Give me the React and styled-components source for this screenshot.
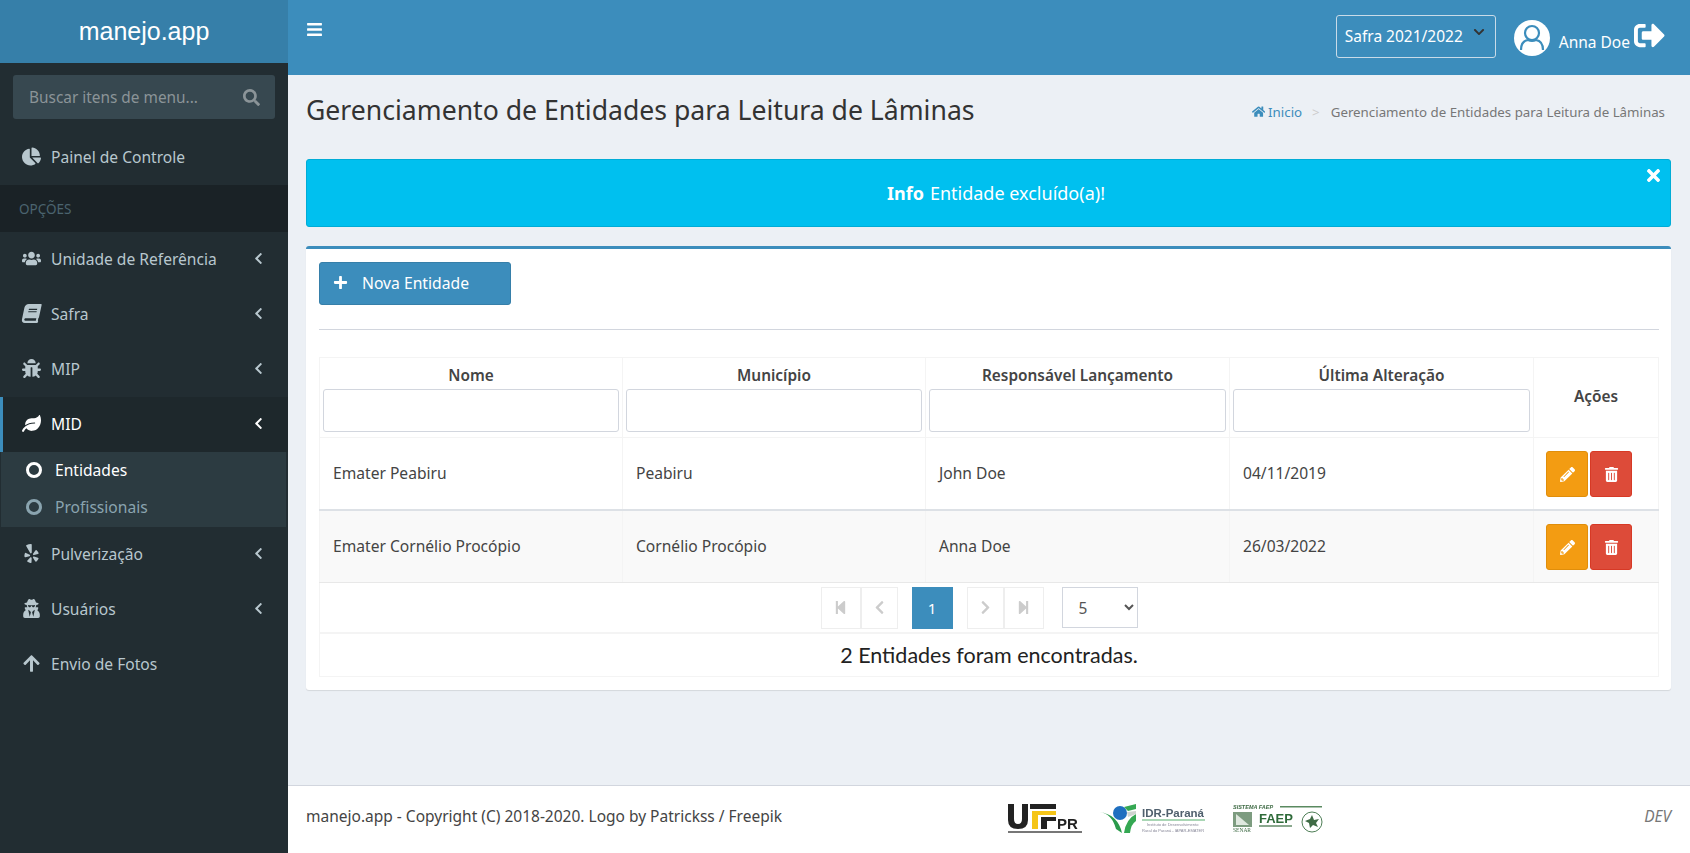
import React from 'react';
import styled, { createGlobalStyle } from 'styled-components';
import {
  FaArrowUp, FaBars, FaBook, FaBug, FaChartPie, FaChevronDown, FaChevronLeft, FaChevronRight,
  FaHome, FaLeaf, FaPencilAlt, FaPlus, FaSearch, FaSignOutAlt, FaStepBackward,
  FaStepForward, FaTimes, FaTrashAlt, FaUsers, FaUserSecret, FaYelp,
} from 'react-icons/fa';

const font = '"Noto Sans", "Lato", sans-serif';

const Global = createGlobalStyle`
  * { box-sizing: border-box; }
  html, body { margin: 0; height: 100%; }
  body { font-family: ${font}; font-size: 15.5px; color: #333; background: #ecf0f5; overflow: hidden; }
`;

const S = {
  Layout: styled.div`
    display: flex;
    width: 1690px;
    height: 853px;
  `,
  Sidebar: styled.aside`
    width: 288px;
    flex: none;
    background: #222d32;
    display: flex;
    flex-direction: column;
  `,
  Brand: styled.div`
    height: 63px;
    background: #367fa9;
    color: #fff;
    font-family: 'Liberation Sans', sans-serif;
    font-size: 25px;
    display: flex;
    align-items: center;
    justify-content: center;
  `,
  Search: styled.div`
    margin: 12px 13px 11px;
    height: 44px;
    border-radius: 3px;
    background: #374850;
    color: #8b9498;
    display: flex;
    align-items: center;
    justify-content: space-between;
    padding: 0 15px 0 16px;
    font-size: 15.4px;
    svg { font-size: 17px; }
  `,
  MenuItem: styled.div`
    height: 55px;
    display: flex;
    align-items: center;
    color: ${(p) => (p.$active ? '#fff' : '#b8c7ce')};
    background: ${(p) => (p.$active ? '#1e282c' : 'transparent')};
    border-left: 3px solid ${(p) => (p.$active ? '#3c8dbc' : 'transparent')};
    padding: 0 23px 2px 19px;
    font-size: 15.6px;
  `,
  MenuIcon: styled.span`
    width: 29px;
    display: flex;
    font-size: 19px;
  `,
  MenuLabel: styled.span`
    flex: 1;
  `,
  SlantedBook: styled(FaBook)`
    transform: skewX(-12deg);
  `,
  Header: styled.div`
    height: 47px;
    background: #1a2226;
    color: #4b646f;
    font-size: 13.5px;
    display: flex;
    align-items: center;
    padding-left: 19px;
  `,
  SubMenu: styled.div`
    height: 75px;
    margin: 0 2px 0 1px;
    background: #2c3b41;
    display: flex;
    flex-direction: column;
    justify-content: center;
    padding-bottom: 2px;
  `,
  SubItem: styled.div`
    height: 37px;
    display: flex;
    align-items: center;
    gap: 13px;
    padding-left: 25px;
    color: ${(p) => (p.$active ? '#fff' : '#8aa4af')};
    font-size: 15.6px;
  `,
  SubDot: styled.span`
    width: 16px;
    height: 16px;
    border-radius: 50%;
    border: 3px solid currentColor;
  `,
  Chevron: styled(FaChevronLeft)`
    font-size: 13px;
  `,
  Main: styled.div`
    flex: 1;
    min-width: 0;
    display: flex;
    flex-direction: column;
  `,
  TopBar: styled.header`
    height: 75px;
    background: #3c8dbc;
    color: #fff;
    display: flex;
    align-items: center;
    justify-content: space-between;
    padding: 0 25px 0 18px;
  `,
  Burger: styled.span`
    display: flex;
    font-size: 17px;
    margin-top: -16px;
  `,
  TopRight: styled.div`
    display: flex;
    align-items: center;
  `,
  SafraWrap: styled.div`
    position: relative;
    width: 160px;
    height: 43px;
    margin: -3px 18px 0 0;
  `,
  SafraSelect: styled.select`
    appearance: none;
    width: 100%;
    height: 100%;
    border: 1px solid #c9dbe8;
    border-radius: 3px;
    background: transparent;
    color: #fff;
    font-family: ${font};
    font-size: 15.5px;
    padding: 0 8px;
  `,
  SafraArrow: styled.span`
    position: absolute;
    right: 11px;
    top: 11px;
    color: #333;
    font-size: 12px;
    display: flex;
  `,
  User: styled.div`
    display: flex;
    align-items: center;
    font-size: 15.5px;
  `,
  UserName: styled.span`
    margin: 8px 4px 0 9px;
  `,
  Logout: styled(FaSignOutAlt)`
    font-size: 31px;
    margin-top: -5px;
  `,
  Content: styled.main`
    flex: 1;
    padding: 0 19px 0 18px;
  `,
  TitleRow: styled.div`
    display: flex;
    align-items: center;
    justify-content: space-between;
    height: 84px;
    padding: 0 6px 15px 0;
  `,
  Title: styled.h1`
    margin: 0;
    font-size: 26.6px;
    font-weight: 400;
    color: #333;
  `,
  Crumbs: styled.div`
    display: flex;
    align-items: center;
    gap: 4px;
    font-size: 13.3px;
    color: #777;
    margin-top: 5px;
  `,
  CrumbLink: styled.span`
    color: #3c8dbc;
    display: flex;
    align-items: center;
    gap: 3px;
  `,
  CrumbSep: styled.span`
    color: #ccc;
    margin: 0 7px 0 6px;
  `,
  Alert: styled.div`
    position: relative;
    height: 68px;
    background: #00c0ef;
    border: 1px solid #00acd6;
    border-radius: 3px;
    color: #fff;
    font-size: 18px;
    display: flex;
    align-items: center;
    justify-content: center;
    gap: 6px;
    padding-left: 15px;
    margin-bottom: 19px;
  `,
  AlertClose: styled.span`
    position: absolute;
    top: 6px;
    right: 7px;
    font-size: 19px;
    display: flex;
  `,
  Box: styled.section`
    background: #fff;
    border-top: 3px solid #3c8dbc;
    border-radius: 3px;
    box-shadow: 0 1px 1px rgba(0, 0, 0, 0.1);
    padding: 13px 12px 13px 13px;
  `,
  NewButton: styled.button`
    width: 192px;
    height: 43px;
    background: #3c8dbc;
    border: 1px solid #367fa9;
    border-radius: 3px;
    color: #fff;
    font-family: ${font};
    font-size: 15.7px;
    display: flex;
    align-items: center;
    gap: 14px;
    padding: 0 13px 2px;
  `,
  Rule: styled.hr`
    border: 0;
    border-top: 1px solid #d2d6de;
    margin: 24px 0 27px;
  `,
  Table: styled.table`
    width: 100%;
    table-layout: fixed;
    border-collapse: collapse;
    border: 1px solid #f4f4f4;
    font-size: 15.6px;
  `,
  Th: styled.th`
    border: 1px solid #f4f4f4;
    padding: ${(p) => (p.$plain ? '4px 3px 7px' : '5px 3px 4px')};
    color: #444;
    font-size: 15.4px;
    font-weight: 600;
    height: 80px;
  `,
  FilterInput: styled.input`
    display: block;
    width: 100%;
    height: 43px;
    margin-top: 3px;
    border: 1px solid #d2d6de;
    border-radius: 3px;
    background: #fff;
  `,
  Tr: styled.tr`
    background: ${(p) => (p.$odd ? '#f9f9f9' : '#fff')};
    border-top: ${(p) => (p.$odd ? '2px solid #dde1e6' : '0')};
  `,
  Td: styled.td`
    border-left: 1px solid #f4f4f4;
    border-right: 1px solid #f4f4f4;
    border-bottom: 1px solid #e8e8e8;
    height: ${(p) => (p.$tall ? 73 : 72)}px;
    padding: 0 13px;
    color: #444;
  `,
  Actions: styled.div`
    display: flex;
    gap: 2px;
    margin: 2px 0 0 -1px;
  `,
  ActionButton: styled.button`
    width: 42px;
    height: 46px;
    border-radius: 3px;
    border: 1px solid ${(p) => (p.$danger ? '#d73925' : '#e08e0b')};
    background: ${(p) => (p.$danger ? '#dd4b39' : '#f39c12')};
    color: #fff;
    font-size: 15px;
    display: flex;
    align-items: center;
    justify-content: center;
    padding: 0;
  `,
  Pager: styled.div`
    height: 50px;
    border: 1px solid #f4f4f4;
    border-top: 0;
    display: flex;
    align-items: center;
    justify-content: center;
    padding-right: 20px;
  `,
  PageButton: styled.span`
    width: ${(p) => p.$w || 37}px;
    height: 42px;
    border: 1px solid #eee;
    color: #ccc;
    font-size: 15px;
    display: flex;
    align-items: center;
    justify-content: center;
  `,
  PageCurrent: styled.span`
    width: 41px;
    height: 42px;
    margin: 0 14px;
    background: #3c8dbc;
    color: #fff;
    font-size: 15px;
    display: flex;
    align-items: center;
    justify-content: center;
  `,
  PageSize: styled.select`
    width: 76px;
    height: 41px;
    margin-left: 18px;
    border: 1px solid #d2d6de;
    background: #fff;
    color: #555;
    font-family: ${font};
    font-size: 15.5px;
    padding: 0 12px;
  `,
  Count: styled.div`
    height: 44px;
    border: 1px solid #f4f4f4;
    color: #222;
    font-family: 'Lato', sans-serif;
    font-size: 21.5px;
    display: flex;
    align-items: center;
    justify-content: center;
  `,
  Footer: styled.footer`
    height: 68px;
    background: #fff;
    border-top: 1px solid #d2d6de;
    display: flex;
    align-items: center;
    justify-content: space-between;
    padding: 0 19px 8px 18px;
    font-size: 15.5px;
    color: #444;
    position: relative;
  `,
  Logos: styled.div`
    position: absolute;
    left: 720px;
    top: 18px;
    display: flex;
    align-items: center;
    gap: 16px;
    filter: blur(0.5px);
  `,
  Dev: styled.em`
    color: #777;
    font-size: 15.5px;
  `,
};

const menuTop = [
  { icon: <FaUsers />, label: 'Unidade de Referência', arrow: true },
  { icon: <S.SlantedBook />, label: 'Safra', arrow: true },
  { icon: <FaBug />, label: 'MIP', arrow: true },
];

const menuBottom = [
  { icon: <FaYelp />, label: 'Pulverização', arrow: true },
  { icon: <FaUserSecret />, label: 'Usuários', arrow: true },
  { icon: <FaArrowUp />, label: 'Envio de Fotos' },
];

const rows = [
  ['Emater Peabiru', 'Peabiru', 'John Doe', '04/11/2019'],
  ['Emater Cornélio Procópio', 'Cornélio Procópio', 'Anna Doe', '26/03/2022'],
];

const columns = ['Nome', 'Município', 'Responsável Lançamento', 'Última Alteração'];

const Avatar = () => (
  <svg width="36" height="36" viewBox="0 0 36 36">
    <circle cx="18" cy="18" r="18" fill="#fff" />
    <circle cx="18" cy="13" r="7" fill="#fff" stroke="#3c8dbc" strokeWidth="2.2" />
    <path d="M7 30q0-9 7-10q4 2 8 0q7 1 7 10" fill="#fff" stroke="#3c8dbc" strokeWidth="2.2" />
  </svg>
);

const UtfprLogo = () => (
  <svg width="76" height="30" viewBox="0 0 76 30">
    <path d="M0 0h6v15q0 5 4 5t4-5V0h6v16q0 9-10 9T0 16z" fill="#222" />
    <rect x="22" y="0" width="26" height="5" fill="#222" />
    <path d="M24 7h24v4H30v14h-6z" fill="#f5c518" />
    <path d="M33 13h15v4h-9v8h-6z" fill="#222" />
    <text x="49" y="25" fontFamily="Liberation Sans" fontSize="15" fontWeight="700" fill="#222">PR</text>
    <rect x="0" y="27" width="74" height="2" fill="#777" />
  </svg>
);

const IdrLogo = () => (
  <svg width="106" height="30" viewBox="0 0 106 30">
    <path d="M0 8q12 2 16 17l6 4Q18 11 0 8z" fill="#2a9a4a" />
    <circle cx="20" cy="9" r="7" fill="#1f6fc0" />
    <path d="M24 3l12-3v5l-8 2zM24 29q2-14 12-19v7q-5 3-6 12z" fill="#35a853" />
    <path d="M27 8l9-1v3l-8 3z" fill="#cfd4d0" />
    <text x="42" y="13" fontFamily="Liberation Sans" fontSize="11.5" fontWeight="700" fill="#50606e">IDR-Paraná</text>
    <rect x="42" y="15" width="63" height="2" fill="#a9d6b5" />
    <text x="47" y="22" fontFamily="Liberation Sans" fontSize="4" fill="#889">Instituto de Desenvolvimento</text>
    <text x="42" y="28" fontFamily="Liberation Sans" fontSize="4" fill="#889">Rural do Paraná - IAPAR-EMATER</text>
  </svg>
);

const FaepLogo = () => (
  <svg width="90" height="30" viewBox="0 0 90 30" style={{ marginLeft: 11 }}>
    <text x="0" y="5" fontFamily="Liberation Sans" fontSize="5.5" fontWeight="700" fontStyle="italic" fill="#3f6b45">SISTEMA FAEP</text>
    <rect x="47" y="2" width="42" height="1.5" fill="#5a8a60" />
    <rect x="0" y="8" width="19" height="15" fill="#7d9c80" />
    <path d="M3 10l13 11H3z" fill="#dfe8df" />
    <text x="0" y="28" fontFamily="Liberation Serif" fontSize="5.5" fill="#3f6b45">SENAR</text>
    <text x="26" y="19" fontFamily="Liberation Sans" fontSize="13" fontWeight="700" fill="#2f6b3a">FAEP</text>
    <rect x="26" y="21" width="33" height="2" fill="#8aa88e" />
    <circle cx="79" cy="18" r="10" fill="#fff" stroke="#4d7d55" strokeWidth="1" />
    <path d="M79 11l2 5 5-1-3 4 2 4-5-2-3 3-1-5-4-2 5-2z" fill="#3f6b45" />
  </svg>
);

const Sidebar = () => (
  <S.Sidebar>
    <S.Brand>manejo.app</S.Brand>
    <S.Search>
      Buscar itens de menu...
      <FaSearch />
    </S.Search>
    <S.MenuItem>
      <S.MenuIcon><FaChartPie /></S.MenuIcon>
      <S.MenuLabel>Painel de Controle</S.MenuLabel>
    </S.MenuItem>
    <S.Header>OPÇÕES</S.Header>
    {menuTop.map((item) => (
      <S.MenuItem key={item.label}>
        <S.MenuIcon>{item.icon}</S.MenuIcon>
        <S.MenuLabel>{item.label}</S.MenuLabel>
        <S.Chevron />
      </S.MenuItem>
    ))}
    <S.MenuItem $active>
      <S.MenuIcon><FaLeaf /></S.MenuIcon>
      <S.MenuLabel>MID</S.MenuLabel>
      <S.Chevron />
    </S.MenuItem>
    <S.SubMenu>
      <S.SubItem $active><S.SubDot />Entidades</S.SubItem>
      <S.SubItem><S.SubDot />Profissionais</S.SubItem>
    </S.SubMenu>
    {menuBottom.map((item) => (
      <S.MenuItem key={item.label}>
        <S.MenuIcon>{item.icon}</S.MenuIcon>
        <S.MenuLabel>{item.label}</S.MenuLabel>
        {item.arrow && <S.Chevron />}
      </S.MenuItem>
    ))}
  </S.Sidebar>
);

const TopBar = () => (
  <S.TopBar>
    <S.Burger><FaBars /></S.Burger>
    <S.TopRight>
      <S.SafraWrap>
        <S.SafraSelect defaultValue="2021">
          <option value="2021">Safra 2021/2022</option>
        </S.SafraSelect>
        <S.SafraArrow><FaChevronDown /></S.SafraArrow>
      </S.SafraWrap>
      <S.User>
        <Avatar />
        <S.UserName>Anna Doe</S.UserName>
        <S.Logout />
      </S.User>
    </S.TopRight>
  </S.TopBar>
);

const EntityTable = () => (
  <S.Table>
    <colgroup>
      <col style={{ width: 303 }} />
      <col style={{ width: 303 }} />
      <col style={{ width: 304 }} />
      <col style={{ width: 304 }} />
      <col />
    </colgroup>
    <thead>
      <tr>
        {columns.map((name) => (
          <S.Th key={name}>
            {name}
            <S.FilterInput />
          </S.Th>
        ))}
        <S.Th $plain>Ações</S.Th>
      </tr>
    </thead>
    <tbody>
      {rows.map((row, i) => (
        <S.Tr key={row[0]} $odd={i % 2 === 1}>
          {row.map((cell) => <S.Td key={cell} $tall={i % 2 === 1}>{cell}</S.Td>)}
          <S.Td $tall={i % 2 === 1}>
            <S.Actions>
              <S.ActionButton><FaPencilAlt /></S.ActionButton>
              <S.ActionButton $danger><FaTrashAlt /></S.ActionButton>
            </S.Actions>
          </S.Td>
        </S.Tr>
      ))}
    </tbody>
  </S.Table>
);

export default function App() {
  return (
    <>
      <Global />
      <S.Layout>
        <Sidebar />
        <S.Main>
          <TopBar />
          <S.Content>
            <S.TitleRow>
              <S.Title>Gerenciamento de Entidades para Leitura de Lâminas</S.Title>
              <S.Crumbs>
                <S.CrumbLink><FaHome />Inicio</S.CrumbLink>
                <S.CrumbSep>&gt;</S.CrumbSep>
                Gerenciamento de Entidades para Leitura de Lâminas
              </S.Crumbs>
            </S.TitleRow>
            <S.Alert>
              <strong>Info</strong> Entidade excluído(a)!
              <S.AlertClose><FaTimes /></S.AlertClose>
            </S.Alert>
            <S.Box>
              <S.NewButton><FaPlus size={15} />Nova Entidade</S.NewButton>
              <S.Rule />
              <EntityTable />
              <S.Pager>
                <S.PageButton $w={40}><FaStepBackward /></S.PageButton>
                <S.PageButton><FaChevronLeft /></S.PageButton>
                <S.PageCurrent>1</S.PageCurrent>
                <S.PageButton><FaChevronRight /></S.PageButton>
                <S.PageButton $w={40}><FaStepForward /></S.PageButton>
                <S.PageSize defaultValue="5">
                  <option value="5">5</option>
                </S.PageSize>
              </S.Pager>
              <S.Count>2 Entidades foram encontradas.</S.Count>
            </S.Box>
          </S.Content>
          <S.Footer>
            <span>manejo.app - Copyright (C) 2018-2020. Logo by Patrickss / Freepik</span>
            <S.Logos>
              <UtfprLogo />
              <IdrLogo />
              <FaepLogo />
            </S.Logos>
            <S.Dev>DEV</S.Dev>
          </S.Footer>
        </S.Main>
      </S.Layout>
    </>
  );
}
